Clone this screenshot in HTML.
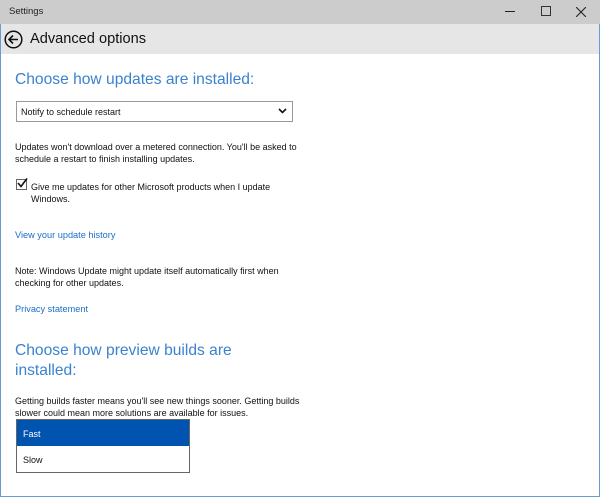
<!DOCTYPE html>
<html><head><meta charset="utf-8"><style>
*{margin:0;padding:0;box-sizing:border-box}
body{width:600px;height:497px;overflow:hidden;background:#fff;font-family:"Liberation Sans",sans-serif;position:relative;color:#000}
.abs{position:absolute;white-space:nowrap}
.t{font-size:9px;line-height:12px;color:#111}
.h{font-size:15.6px;color:#3a82cf;line-height:20px}
.l{font-size:9.2px;color:#1a6fc9}
</style></head><body>
<div class="abs" style="left:0;top:0;width:600px;height:24px;background:#cccccc"></div>
<div class="abs" style="left:9px;top:6px;font-size:9.5px;color:#222">Settings</div>
<div class="abs" style="left:505px;top:11px;width:10px;height:1px;background:#222"></div>
<div class="abs" style="left:541px;top:6px;width:10px;height:10px;border:1px solid #333"></div>
<svg class="abs" style="left:576px;top:7px" width="10" height="10"><path d="M0 0L10 10M10 0L0 10" stroke="#222" stroke-width="1.1"/></svg>
<div class="abs" style="left:0;top:24px;width:600px;height:30px;background:#e6e6e6"></div>
<svg class="abs" style="left:4px;top:30px" width="19" height="19"><circle cx="9.5" cy="9.5" r="8.3" fill="none" stroke="#111" stroke-width="1.5"/><path d="M14 9.5H5.5M9 5.5L5 9.5L9 13.5" fill="none" stroke="#111" stroke-width="1.6"/></svg>
<div class="abs" style="left:30px;top:31px;font-size:14.6px;color:#111">Advanced options</div>
<div class="abs" style="left:0;top:24px;width:1px;height:473px;background:#6a9ad2"></div>
<div class="abs" style="left:599px;top:24px;width:1px;height:473px;background:#6a9ad2"></div>
<div class="abs" style="left:0;top:496px;width:600px;height:1px;background:#6a9ad2"></div>

<div class="abs h" style="left:15px;top:70px">Choose how updates are installed:</div>
<div class="abs" style="left:16px;top:101px;width:277px;height:21px;border:1px solid #999"></div>
<div class="abs t" style="left:21px;top:106px">Notify to schedule restart</div>
<svg class="abs" style="left:278px;top:108px" width="9" height="6"><path d="M1 1L4.5 4.5L8 1" fill="none" stroke="#111" stroke-width="1.6"/></svg>

<div class="abs t" style="left:15px;top:141px">Updates won't download over a metered connection. You'll be asked to<br>schedule a restart to finish installing updates.</div>
<div class="abs" style="left:16px;top:179px;width:11px;height:11px;border:1px solid #666"></div>
<svg class="abs" style="left:16px;top:177px" width="12" height="12"><path d="M2 6L5 9.5L11 1.5" fill="none" stroke="#111" stroke-width="1.6"/></svg>
<div class="abs t" style="left:31px;top:181px">Give me updates for other Microsoft products when I update<br>Windows.</div>
<div class="abs l" style="left:15px;top:230px">View your update history</div>
<div class="abs t" style="left:15px;top:265px">Note: Windows Update might update itself automatically first when<br>checking for other updates.</div>
<div class="abs l" style="left:15px;top:304px">Privacy statement</div>

<div class="abs h" style="left:15px;top:341px">Choose how preview builds are<br>installed:</div>
<div class="abs t" style="left:15px;top:395px">Getting builds faster means you'll see new things sooner. Getting builds<br>slower could mean more solutions are available for issues.</div>
<div class="abs" style="left:16px;top:419px;width:174px;height:54px;border:1px solid #666;background:#fff"></div>
<div class="abs" style="left:17px;top:420px;width:172px;height:26px;background:#0054b0"></div>
<div class="abs t" style="left:23px;top:428px;color:#fff">Fast</div>
<div class="abs t" style="left:23px;top:454px">Slow</div>
</body></html>
